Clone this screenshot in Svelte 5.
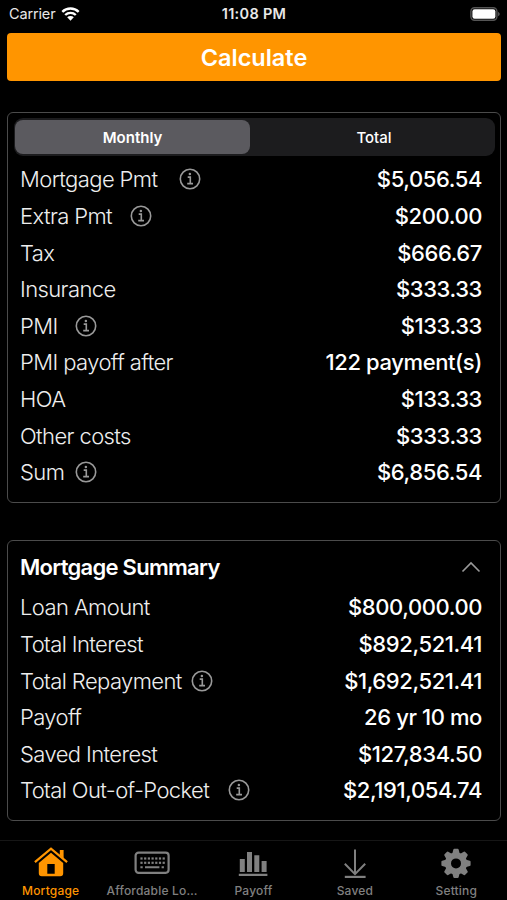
<script>
    let tab = $state('Monthly');
    let open = $state(true);
    let active = $state('Mortgage');

    // infoAt: space kept for the label before its info icon
    const costs = [
        { label: 'Mortgage Pmt', value: '$5,056.54', infoAt: 159 },
        { label: 'Extra Pmt', value: '$200.00', infoAt: 110 },
        { label: 'Tax', value: '$666.67' },
        { label: 'Insurance', value: '$333.33' },
        { label: 'PMI', value: '$133.33', infoAt: 55 },
        { label: 'PMI payoff after', value: '122 payment(s)' },
        { label: 'HOA', value: '$133.33' },
        { label: 'Other costs', value: '$333.33' },
        { label: 'Sum', value: '$6,856.54', infoAt: 55 }
    ];

    const summary = [
        { label: 'Loan Amount', value: '$800,000.00' },
        { label: 'Total Interest', value: '$892,521.41' },
        { label: 'Total Repayment', value: '$1,692,521.41', infoAt: 171 },
        { label: 'Payoff', value: '26 yr 10 mo' },
        { label: 'Saved Interest', value: '$127,834.50' },
        { label: 'Total Out-of-Pocket', value: '$2,191,054.74', infoAt: 208 }
    ];

    const tabs = ['Mortgage', 'Affordable Lo…', 'Payoff', 'Saved', 'Setting'];
    const teeth = [0, 45, 90, 135, 180, 225, 270, 315];
    const keys = [12.5, 16.2, 19.9, 23.6, 27.3, 31, 34.7];
</script>

{#snippet row(item)}
    <div class="row">
        <span class="label" style:width={item.infoAt ? item.infoAt + 'px' : 'auto'}>{item.label}</span>
        {#if item.infoAt}
            <svg class="info" viewBox="0 0 22 22">
                <circle cx="11" cy="11" r="9.7" />
                <path d="M8.7 9.1h2.6v6.4M8.2 15.6h5.8" />
                <circle class="dot" cx="10.9" cy="5.9" r="1.25" />
            </svg>
        {/if}
        <span class="value">{item.value}</span>
    </div>
{/snippet}

<div class="screen">
    <div class="status">
        <div class="carrier">
            <span>Carrier</span>
            <svg width="19" height="14" viewBox="0 0 19 14">
                <path d="M1.3 4.9a11.7 11.7 0 0 1 16.4 0M4.2 8a7.6 7.6 0 0 1 10.6 0" />
                <path class="fill" d="M6.2 10.3a4.7 4.7 0 0 1 6.6 0L9.5 13.7z" />
            </svg>
        </div>
        <span class="time">11:08 PM</span>
        <div class="power">
            <svg width="31" height="14" viewBox="0 0 31 14">
                <rect class="case" x=".9" y=".8" width="26" height="12.4" rx="3.6" />
                <rect class="charge" x="2.4" y="2.3" width="23" height="9.4" rx="2.2" />
                <path class="tip" d="M28.2 4.7q3 2.3 0 4.6z" />
            </svg>
        </div>
    </div>

    <button class="calculate" type="button">Calculate</button>

    <div class="card costs">
        <div class="segment">
            {#each ['Monthly', 'Total'] as name}
                <button type="button" class:selected={tab === name} onclick={() => (tab = name)}>{name}</button>
            {/each}
        </div>
        {#each costs as item}
            {@render row(item)}
        {/each}
    </div>

    <div class="card summary">
        <button class="heading" type="button" onclick={() => (open = !open)}>
            <span>Mortgage Summary</span>
            <svg class:closed={!open} width="20" height="12" viewBox="0 0 20 12">
                <path d="M1.5 10.5 10 2l8.5 8.5" />
            </svg>
        </button>
        {#if open}
            {#each summary as item}
                {@render row(item)}
            {/each}
        {/if}
    </div>

    <nav>
        {#each tabs as name, i}
            <button type="button" class:active={active === name} onclick={() => (active = name)}>
                <svg width="46" height="36" viewBox="0 0 46 36">
                    {#if i === 0}
                        <path class="line" stroke-width="2.2" d="M6.9 17.2 23 3.6l16.1 13.6" />
                        <path class="fill" d="M31.8 5h3.8v8.5l-3.8-3.3z" />
                        <path class="fill" fill-rule="evenodd" d="M23 7.8 10.8 18v10.2q0 3 3 3h18.4q3 0 3-3V18zM19.3 19h7.4v9.7h-7.4z" />
                    {:else if i === 1}
                        <rect class="line" x="6.6" y="7.6" width="33" height="20.2" rx="3" stroke-width="2.2" />
                        {#each keys as x}
                            <rect class="fill" x={x - 1.1} y="12.4" width="2.2" height="2.2" />
                            <rect class="fill" x={x - 1.1} y="16.7" width="2.2" height="2.2" />
                        {/each}
                        <path class="line" stroke-width="2" d="M11.4 22.3h2.3M16 22.3h14.4M32.6 22.3h2.3" />
                    {:else if i === 2}
                        <path class="fill" d="M9.8 14h5v13h-5zM17 7h5v20h-5zM24.3 10.3h5v16.7h-5zM31.6 16h5v11h-5zM8.8 28.7h28.6v2.2H8.8z" />
                    {:else if i === 3}
                        <path class="line" stroke-width="2" d="M23 4.5v25M12.8 18.8 23 29.1l10.2-10.3" />
                        <path class="line" stroke-width="2.2" d="M12.8 31.9h20.8" />
                    {:else}
                        <circle class="line" cx="23" cy="18.4" r="8" stroke-width="6" />
                        {#each teeth as angle}
                            <path class="fill" transform="rotate({angle} 23 18.4)" d="M19.2 9 20.3 4.7q.2-.9 1.1-.9h3.2q.9 0 1.1.9L26.8 9z" />
                        {/each}
                    {/if}
                </svg>
                <span>{name}</span>
            </button>
        {/each}
    </nav>
</div>

<style>
    :global(body) {
        background: #000;
    }

    .screen {
        width: 507px;
        height: 900px;
        display: flex;
        flex-direction: column;
        overflow: hidden;
        background: #000;
        color: #fff;
        font-family: Inter, "Liberation Sans", sans-serif;
    }

    button {
        padding: 0;
        border: 0;
        background: none;
        color: inherit;
        font-family: inherit;
    }

    .status {
        display: grid;
        grid-template-columns: 1fr auto 1fr;
        align-items: center;
        height: 33px;
        padding: 0 6px 6px 9px;
        box-sizing: border-box;
        font-size: 14.5px;
        color: #e8e8e8;
    }

    .carrier {
        display: flex;
        align-items: center;
        gap: 6px;
        letter-spacing: -.15px;
    }

    .carrier path {
        fill: none;
        stroke: #fff;
        stroke-width: 2.4;
    }

    .carrier .fill {
        fill: #fff;
        stroke: none;
    }

    .time {
        margin-right: 2px;
        font-weight: 600;
        letter-spacing: .3px;
    }

    .power {
        display: flex;
        justify-content: flex-end;
    }

    .case {
        fill: none;
        stroke: #555;
        stroke-width: 1.4;
    }

    .charge {
        fill: #fff;
    }

    .tip {
        fill: #666;
    }

    .calculate {
        flex: none;
        height: 48px;
        margin: 0 6px 0 7px;
        border-radius: 4px;
        background: #ff9500;
        font-size: 23.5px;
        font-weight: 600;
    }

    .card {
        flex: none;
        margin: 31px 6px 0 7px;
        border: 1px solid #4b4b4b;
        border-radius: 6px;
        box-sizing: border-box;
    }

    .costs {
        height: 391px;
        padding: 5px 0 0;
    }

    .summary {
        height: 281px;
        margin-top: 37px;
    }

    .segment {
        display: grid;
        grid-template-columns: 235px 1fr;
        gap: 4px;
        height: 38px;
        margin: 0 5px 5px 6px;
        padding: 2px 1px;
        box-sizing: border-box;
        border-radius: 9px;
        background: #1c1c1e;
    }

    .segment button {
        border-radius: 8px;
        font-size: 15px;
        font-weight: 500;
    }

    .segment .selected {
        background: #5b5a5f;
        font-weight: 600;
    }

    .row {
        display: flex;
        align-items: center;
        height: 36.63px;
        padding: 0 18px 0 12px;
        font-size: 22px;
        white-space: nowrap;
    }

    .label {
        flex: none;
        font-weight: 300;
        letter-spacing: -.6px;
        color: #eee;
    }

    .info {
        width: 22px;
        height: 22px;
        fill: none;
        stroke: #999;
        stroke-width: 1.6;
    }

    .info .dot {
        fill: #999;
        stroke: none;
    }

    .value {
        margin-left: auto;
        font-weight: 500;
        letter-spacing: -.4px;
    }

    .heading {
        display: flex;
        align-items: center;
        justify-content: space-between;
        width: 100%;
        height: 48px;
        padding: 4px 19px 0 12px;
        font-size: 22px;
        font-weight: 600;
        letter-spacing: -.72px;
    }

    .heading path {
        fill: none;
        stroke: #999;
        stroke-width: 1.6;
    }

    .closed {
        transform: rotate(180deg);
    }

    nav {
        display: grid;
        grid-template-columns: repeat(5, 1fr);
        height: 60px;
        margin-top: auto;
        border-top: 1px solid #161616;
        box-sizing: border-box;
    }

    nav button {
        display: flex;
        flex-direction: column;
        align-items: center;
        padding-top: 4px;
        color: #808080;
        font-size: 12px;
        font-weight: 500;
        letter-spacing: .2px;
        white-space: nowrap;
    }

    nav svg {
        flex: none;
        margin-bottom: 2px;
    }

    nav .line {
        fill: none;
        stroke: currentColor;
    }

    nav .fill {
        fill: currentColor;
    }

    nav .active {
        color: #ff9500;
    }
</style>
